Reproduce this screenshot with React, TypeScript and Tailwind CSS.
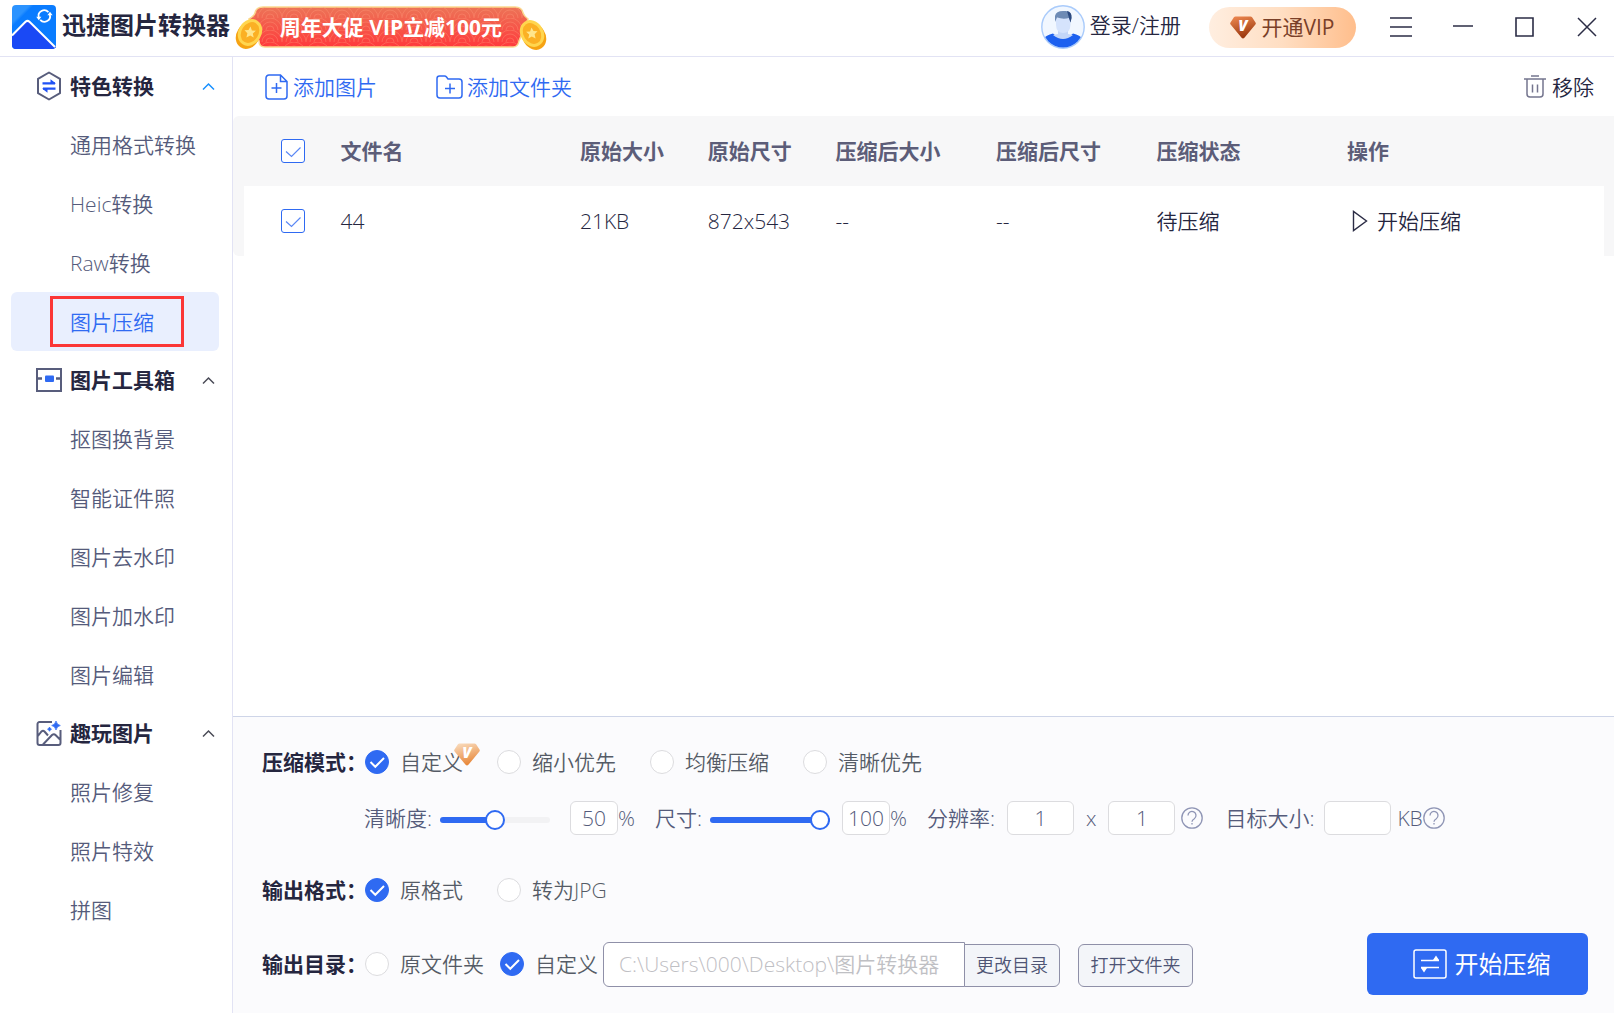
import { useState, type CSSProperties, type ReactNode } from "react";

const groups = [
  {
    title: "特色转换",
    icon: <HexIcon />,
    items: ["通用格式转换", "Heic转换", "Raw转换", "图片压缩"],
  },
  {
    title: "图片工具箱",
    icon: <ToolboxIcon />,
    items: ["抠图换背景", "智能证件照", "图片去水印", "图片加水印", "图片编辑"],
  },
  {
    title: "趣玩图片",
    icon: <PhotoIcon />,
    items: ["照片修复", "照片特效", "拼图"],
  },
];

const columns = ["原始大小", "原始尺寸", "压缩后大小", "压缩后尺寸", "压缩状态", "操作"];

function HexIcon() {
  return (
    <svg width="26" height="30" viewBox="0 0 26 30" fill="none">
      <path d="M13 1.5 24 7.8v14.4L13 28.5 2 22.2V7.8z" stroke="#585d7c" strokeWidth="2" strokeLinejoin="round" />
      <path d="M6.5 12.4h12.5M19.5 17.6H7" stroke="#2052f5" strokeWidth="2.4" />
      <path d="M14.5 8.2l5.5 4.2h-5.5zM11.5 21.8 6 17.6h5.5z" fill="#2052f5" />
    </svg>
  );
}

function ToolboxIcon() {
  return (
    <svg width="26" height="24" viewBox="0 0 26 24" fill="none">
      <rect x="1" y="1" width="24" height="22" stroke="#585d7c" strokeWidth="2" />
      <path d="M0 10.5h6M20 10.5h6" stroke="#585d7c" strokeWidth="2.4" />
      <rect x="9" y="7.5" width="9" height="6.5" rx="1" fill="#2f6af2" />
    </svg>
  );
}

function PhotoIcon() {
  return (
    <svg width="26" height="26" viewBox="0 0 26 26" fill="none">
      <path
        d="M16 2H3.5A2 2 0 0 0 1.5 4v19a2 2 0 0 0 2 2h19a2 2 0 0 0 2-2V10M1.500 16.500l4-5q1.500-1.500 3 0l3.500 4M7 24.500l9-9.500q2-1.500 3.500 0l5 5"
        stroke="#585d7c"
        strokeWidth="2"
      />
      <path
        d="M20 1q.8 3.700 4.300 4.500Q20.800 6.300 20 10q-.8-3.700-4.300-4.500Q19.200 4.700 20 1zM13.500 7q.5 1.600 2 2.200-1.500.5-2 2.100-.5-1.600-2-2.100 1.500-.6 2-2.200z"
        fill="#2f6af2"
        stroke="#2f6af2"
        strokeWidth="0.700"
      />
    </svg>
  );
}

function Logo() {
  return (
    <svg width="44" height="44" viewBox="0 0 44 44" fill="none" className="shrink-0">
      <defs>
        <linearGradient id="logo" x1="0" y1="0" x2="1" y2="1">
          <stop offset="0.2" stopColor="#2b93ff" />
          <stop offset="0.25" stopColor="#0a7cff" />
          <stop offset="1" stopColor="#0a7cff" />
        </linearGradient>
      </defs>
      <rect width="44" height="44" rx="4" fill="url(#logo)" />
      <path d="M0 30.500 13.500 16.800q2-1.800 4 0L44 43v-3a4 4 0 0 1-4 4H4a4 4 0 0 1-4-4z" fill="#1a49f5" />
      <path d="M0 30.500 13.500 16.800q2-1.800 4 0L43 42" stroke="#fff" strokeWidth="2" />
      <path d="M26.800 12.500a5.600 5.600 0 0 1 9.600-5.300M37.800 9.500a5.600 5.600 0 0 1-9.600 5.300" stroke="#fff" strokeWidth="1.800" />
      <path d="M24.200 11.800h5.200l-2.600 3.400zM35.400 10.200h5.200L38 6.800z" fill="#fff" />
    </svg>
  );
}

function Coin({ className }: { className: string }) {
  return (
    <svg width="30" height="32" viewBox="0 0 30 32" className={className}>
      <ellipse cx="14" cy="17.500" rx="11.500" ry="14" transform="rotate(32 14 17.500)" fill="#f6a313" />
      <ellipse cx="16" cy="14.500" rx="11.500" ry="14" transform="rotate(32 16 14.500)" fill="#ffd64f" />
      <ellipse cx="16" cy="14.500" rx="8.500" ry="11" transform="rotate(32 16 14.500)" fill="#fbb024" />
      <path d="M16.500 8.500l1.400 3.900 4 .3-3.100 2.700.9 4.200-3.500-2.200-3.800 2 1-4.200-2.900-2.900 4-.2z" fill="#ffe58c" />
    </svg>
  );
}

function Avatar() {
  return (
    <svg width="44" height="44" viewBox="0 0 44 44">
      <clipPath id="face">
        <circle cx="22" cy="22" r="20.500" />
      </clipPath>
      <circle cx="22" cy="22" r="21.200" fill="#f1f7ff" stroke="#a9cbfb" strokeWidth="1.400" />
      <g clipPath="url(#face)">
        <path d="M2 44V34q3-4 10-5.500 10 9 20 0 7 1.500 10 5.500v10z" fill="#1c60ef" />
        <path d="M17 22h10v7q5 1 5 1-10 8-20 0l5-1z" fill="#c3d6f8" />
        <path d="M15 13h14.500v7q-.5 8-7.300 8T15 20z" fill="#d5e3fc" />
        <path d="M14 17V11q1-5 8-5h3q6 .5 5.500 7l-1 4.500-1.500-4.500q-6 1.500-12-.5z" fill="#6e8bb5" />
        <path d="M26 6q5 1 4.500 7l-1 4.500L28 13z" fill="#2c4a80" />
      </g>
    </svg>
  );
}

function Diamond({ light = false, className = "" }: { light?: boolean; className?: string }) {
  const id = light ? "gem-light" : "gem-dark";
  return (
    <svg width="26" height="23" viewBox="0 0 26 23" className={className} aria-hidden="true">
      <linearGradient id={id} x1="0" y1="0" x2="0.3" y2="1">
        <stop offset="0" stopColor={light ? "#fadfc3" : "#f08a52"} />
        <stop offset="1" stopColor={light ? "#e8893c" : "#9c3a10"} />
      </linearGradient>
      <path d="M5.500.500h15q1 0 1.600.8l3.400 5.200q.7 1-.1 2L14.400 21.800q-1.400 1.400-2.800 0L.6 8.500q-.8-1-.1-2l3.400-5.200q.6-.8 1.600-.8z" fill={`url(#${id})`} />
      <text x="13" y="15" textAnchor="middle" fontSize="15" fontWeight="800" fontStyle="italic" fill="#fff">
        V
      </text>
    </svg>
  );
}

function Help() {
  return (
    <button type="button" aria-label="帮助" className="shrink-0">
      <svg width="22" height="22" viewBox="0 0 22 22" fill="none" stroke="#8f95b5" strokeWidth="1.300">
        <circle cx="11" cy="11" r="10.200" />
        <path d="M7 8.500a4 4 0 1 1 6.300 3.200q-2.300 1.300-2.300 3" />
        <path d="M11 16v1.600" />
      </svg>
    </button>
  );
}

function Check({ checked, onChange, label }: { checked: boolean; onChange: () => void; label: string }) {
  return (
    <label className="relative block size-6">
      <input
        type="checkbox"
        aria-label={label}
        checked={checked}
        onChange={onChange}
        className="peer block size-6 appearance-none rounded-[3px] border border-[#2f6af2] bg-white"
      />
      <svg className="absolute inset-0 hidden peer-checked:block" width="24" height="24" viewBox="0 0 24 24" fill="none">
        <path d="M5 12.500l5.500 5L19.500 8.500" stroke="#5b88f5" strokeWidth="1.200" />
      </svg>
    </label>
  );
}

interface RadioProps {
  name: string;
  label: string;
  value: string;
  onSelect: (label: string) => void;
  children?: ReactNode;
}

function Radio({ name, label, value, onSelect, children }: RadioProps) {
  return (
    <label className="relative flex items-center gap-[11px] whitespace-nowrap text-[#555b66]">
      <input
        type="radio"
        name={name}
        checked={value === label}
        onChange={() => onSelect(label)}
        className="peer size-6 shrink-0 appearance-none rounded-full border border-[#dcdcdf] bg-white checked:border-[#2f6af2] checked:bg-[#2f6af2]"
      />
      <svg className="absolute left-0 hidden peer-checked:block" width="24" height="24" viewBox="0 0 24 24" fill="none">
        <path d="M5.500 12l4.800 4.800L19 8" stroke="#fff" strokeWidth="2" />
      </svg>
      {label}
      {children}
    </label>
  );
}

function Slider({ label, value, onChange, className }: { label: string; value: number; onChange: (v: number) => void; className: string }) {
  return (
    <input
      type="range"
      aria-label={label}
      value={value}
      onChange={(e) => onChange(Number(e.target.value))}
      style={{ "--fill": `${value}%` } as CSSProperties}
      className={`mt-1 ml-2 h-5 appearance-none bg-transparent [&::-webkit-slider-runnable-track]:h-[6px] [&::-webkit-slider-runnable-track]:rounded-full [&::-webkit-slider-runnable-track]:bg-[linear-gradient(to_right,#2f6af2_var(--fill),#f2f2f4_var(--fill))] [&::-webkit-slider-thumb]:-mt-[7px] [&::-webkit-slider-thumb]:size-5 [&::-webkit-slider-thumb]:appearance-none [&::-webkit-slider-thumb]:rounded-full [&::-webkit-slider-thumb]:border-2 [&::-webkit-slider-thumb]:border-[#2f6af2] [&::-webkit-slider-thumb]:bg-white ${className}`}
    />
  );
}

function NumberBox({ label, value, className }: { label: string; value: string; className: string }) {
  return (
    <input
      type="text"
      aria-label={label}
      defaultValue={value}
      className={`h-[34px] rounded-md border border-[#dcdcdf] bg-white text-center ${className}`}
    />
  );
}

function Header() {
  return (
    <header className="flex h-[57px] shrink-0 items-center justify-between border-b border-[#e2e3f4] pr-4 pb-[2px] pl-3">
      <div className="flex items-center">
        <Logo />
        <h1 className="ml-[6px] pb-1 text-2xl font-bold whitespace-nowrap text-[#25263f]">迅捷图片转换器</h1>
        <a href="#promo" className="relative ml-1 flex h-[42px] w-[314px] items-center justify-center font-bold whitespace-nowrap text-white">
          <svg className="absolute inset-0" width="314" height="42" viewBox="0 0 314 42">
            <defs>
              <linearGradient id="promo" x1="0" y1="0" x2="0" y2="1">
                <stop offset="0" stopColor="#ec7457" />
                <stop offset="1" stopColor="#ff3a3c" />
              </linearGradient>
              <pattern id="waves" width="24" height="12" patternUnits="userSpaceOnUse">
                <path d="M0 12a12 12 0 0 1 24 0M4 12a8 8 0 0 1 16 0M8 12a4 4 0 0 1 8 0" fill="none" stroke="#ff9a7c" strokeOpacity="0.35" />
              </pattern>
            </defs>
            <path d="M29 1h252q7 0 8 6 1 3 5 6l-9 22q-1 6-6 6H31q-6 0-6-6L15 13q5-3 6-6 1-6 8-6z" fill="url(#promo)" stroke="#fbd98f" strokeWidth="1.500" />
            <path d="M29 1h252q7 0 8 6 1 3 5 6l-9 22q-1 6-6 6H31q-6 0-6-6L15 13q5-3 6-6 1-6 8-6z" fill="url(#waves)" />
          </svg>
          <Coin className="absolute top-3 left-0" />
          <Coin className="absolute top-[13px] right-0 -scale-x-100" />
          <span className="relative">周年大促 VIP立减100元</span>
        </a>
      </div>

      <div className="flex items-center">
        <button type="button" className="flex items-center gap-[5px] whitespace-nowrap text-[#25263f]">
          <Avatar />
          <span className="pb-1">登录/注册</span>
        </button>
        <button
          type="button"
          className="ml-7 flex h-[41px] w-[147px] items-center justify-center gap-[5px] rounded-full bg-linear-to-r from-[#ffeee0] via-[#ffdec2] to-[#ffbe8c] font-normal whitespace-nowrap text-[#7a4028]"
        >
          <Diamond />
          开通VIP
        </button>
        <div className="ml-[34px] flex items-center gap-10 text-[#2b2c45]">
          <button type="button" aria-label="菜单">
            <svg width="22" height="20" viewBox="0 0 22 20" stroke="currentColor" strokeWidth="1.500">
              <path d="M0 1h22M0 10h22M0 19h22" />
            </svg>
          </button>
          <button type="button" aria-label="最小化">
            <svg width="22" height="20" viewBox="0 0 22 20" stroke="currentColor" strokeWidth="1.500">
              <path d="M1 9h20" />
            </svg>
          </button>
          <button type="button" aria-label="最大化">
            <svg width="22" height="20" viewBox="0 0 22 20" fill="none" stroke="currentColor" strokeWidth="1.600">
              <path d="M2 1h17v18H2z" />
            </svg>
          </button>
          <button type="button" aria-label="关闭">
            <svg width="22" height="20" viewBox="0 0 22 20" stroke="currentColor" strokeWidth="1.500">
              <path d="M2 1l18 18M20 1 2 19" />
            </svg>
          </button>
        </div>
      </div>
    </header>
  );
}

function Sidebar() {
  const [active, setActive] = useState("图片压缩");
  return (
    <nav className="w-[233px] shrink-0 border-r border-[#e2e3f4]">
      {groups.map((group, index) => (
        <section key={group.title}>
          <button type="button" className="flex h-[58px] w-full items-center pr-[17px] pl-9 font-bold text-[#25263f]">
            <span className="mr-2 flex w-[26px] justify-center">{group.icon}</span>
            {group.title}
            <svg className="ml-auto" width="13" height="9" viewBox="0 0 13 9" fill="none">
              <path d="M1 7.500l5.500-5.500L12 7.500" stroke={index === 0 ? "#1890ff" : "#4a4b57"} strokeWidth="1.500" />
            </svg>
          </button>
          <ul>
            {group.items.map((item) => (
              <li key={item} className="pr-[13px] pl-[11px]">
                <button
                  type="button"
                  onClick={() => setActive(item)}
                  className={`flex h-[59px] w-full items-center rounded-md ${item === active ? "bg-[#e9effe] pl-[39px] text-[#2f6af2]" : "pl-[59px] text-[#555b7b]"}`}
                >
                  {item === active ? (
                    <span className="flex h-[51px] w-[134px] items-center border-3 border-[#fb3636] pl-[17px]">{item}</span>
                  ) : (
                    item
                  )}
                </button>
              </li>
            ))}
          </ul>
        </section>
      ))}
    </nav>
  );
}

function FileTable() {
  const [checked, setChecked] = useState(true);
  const toggle = () => setChecked(!checked);
  return (
    <div className="rounded-l-md bg-[#f7f7f8] pr-[10px] pl-[11px]">
      <table className="w-full table-fixed text-left whitespace-nowrap">
        <colgroup>
          <col className="w-[7.1%]" />
          <col className="w-[17.6%]" />
          <col className="w-[9.4%]" />
          <col className="w-[9.4%]" />
          <col className="w-[11.8%]" />
          <col className="w-[11.8%]" />
          <col className="w-[14%]" />
          <col />
        </colgroup>
        <thead>
          <tr className="h-[70px] text-[#5c5d78]">
            <th className="pl-[37px]">
              <Check checked={checked} onChange={toggle} label="全选" />
            </th>
            <th>文件名</th>
            {columns.map((c) => (
              <th key={c}>{c}</th>
            ))}
          </tr>
        </thead>
        <tbody>
          <tr className="h-[70px] bg-white text-[#25263f]">
            <td className="pl-[37px]">
              <Check checked={checked} onChange={toggle} label="选择 44" />
            </td>
            <td>44</td>
            <td>21KB</td>
            <td>872x543</td>
            <td>--</td>
            <td>--</td>
            <td>待压缩</td>
            <td>
              <button type="button" className="flex items-center gap-[9px] pl-[5px]">
                <svg width="16" height="22" viewBox="0 0 16 22" fill="none">
                  <path d="M1.500 1.500v19L14.500 11z" stroke="#2b2c45" strokeWidth="1.400" />
                </svg>
                开始压缩
              </button>
            </td>
          </tr>
        </tbody>
      </table>
    </div>
  );
}

function RowTitle({ children }: { children: string }) {
  return <legend className="float-left w-[103px] shrink-0 font-bold whitespace-nowrap text-[#25263f]">{children}</legend>;
}

function Settings() {
  const [mode, setMode] = useState("自定义");
  const [format, setFormat] = useState("原格式");
  const [target, setTarget] = useState("自定义");
  const [clarity, setClarity] = useState(50);
  const [size, setSize] = useState(100);

  return (
    <form className="shrink-0 border-t border-[#ced5e8] bg-[#fbfbfd] pt-7 pr-[26px] pb-[18px] pl-[29px] whitespace-nowrap">
      <fieldset className="flex h-[34px] items-center">
        <RowTitle>压缩模式：</RowTitle>
        <div className="flex gap-[34px]">
          <Radio name="mode" label="自定义" value={mode} onSelect={setMode}>
            <Diamond light className="absolute -top-[5px] left-[89px]" />
          </Radio>
          <Radio name="mode" label="缩小优先" value={mode} onSelect={setMode} />
          <Radio name="mode" label="均衡压缩" value={mode} onSelect={setMode} />
          <Radio name="mode" label="清晰优先" value={mode} onSelect={setMode} />
        </div>
      </fieldset>

      <div className="mt-[22px] flex h-[34px] items-center pl-[102px] text-[#555b7b]">
        清晰度:
        <Slider label="清晰度" value={clarity} onChange={setClarity} className="w-[110px]" />
        <NumberBox key={`clarity-${clarity}`} label="清晰度百分比" value={String(clarity)} className="ml-5 w-12" />%
        <span className="ml-5">尺寸:</span>
        <Slider label="尺寸" value={size} onChange={setSize} className="w-[120px]" />
        <NumberBox key={`size-${size}`} label="尺寸百分比" value={String(size)} className="ml-3 w-12" />%
        <span className="ml-5">分辨率:</span>
        <NumberBox label="分辨率宽" value="1" className="mx-3 w-[67px]" />x
        <NumberBox label="分辨率高" value="1" className="mr-[6px] ml-3 w-[67px]" />
        <Help />
        <span className="ml-[22px]">目标大小:</span>
        <NumberBox label="目标大小" value="" className="mr-[6px] ml-[10px] w-[67px]" />
        KB
        <Help />
      </div>

      <fieldset className="mt-[38px] flex h-[34px] items-center">
        <RowTitle>输出格式：</RowTitle>
        <div className="flex gap-[34px]">
          <Radio name="format" label="原格式" value={format} onSelect={setFormat} />
          <Radio name="format" label="转为JPG" value={format} onSelect={setFormat} />
        </div>
      </fieldset>

      <div className="mt-[26px] flex h-[62px] items-center justify-between">
        <fieldset className="flex items-center">
          <RowTitle>输出目录：</RowTitle>
          <div className="flex gap-4">
            <Radio name="target" label="原文件夹" value={target} onSelect={setTarget} />
            <Radio name="target" label="自定义" value={target} onSelect={setTarget} />
          </div>
          <div className="ml-[5px] flex items-end text-lg text-[#4f5575]">
            <input
              type="text"
              aria-label="输出目录"
              placeholder="C:\Users\000\Desktop\图片转换器"
              className="h-[45px] w-[362px] rounded-l-md border border-[#8f90a8] bg-white px-[15px] text-[21px] placeholder:text-[#bfc0c4]"
            />
            <button type="button" className="-ml-px h-[43px] w-24 rounded-r-md border border-[#8f90a8] bg-[#f3f5f9]">
              更改目录
            </button>
            <button type="button" className="ml-[18px] h-[43px] w-[115px] rounded-md border border-[#8f90a8] bg-[#f3f5f9]">
              打开文件夹
            </button>
          </div>
        </fieldset>
        <button type="button" className="flex h-[62px] w-[221px] items-center justify-center gap-2 rounded-md bg-[#2f6af2] pl-2 text-2xl font-normal text-white">
          <svg width="34" height="30" viewBox="0 0 34 30" fill="none">
            <rect x="1" y="1" width="32" height="28" rx="2" stroke="#fff" strokeWidth="1.500" />
            <path d="M8 11.500h18M8 18.500h18" stroke="#fff" strokeWidth="1.700" />
            <path d="M20 11l3-4.500 3 4.500zM8 19l3 4.500 3-4.500z" fill="#fff" />
          </svg>
          开始压缩
        </button>
      </div>
    </form>
  );
}

export default function App() {
  return (
    <div className="flex min-h-screen flex-col bg-white font-['Open_Sans','Noto_Sans_CJK_SC',sans-serif] text-[21px] leading-7 font-[350]">
      <Header />
      <div className="flex flex-1">
        <Sidebar />
        <main className="flex min-w-0 flex-1 flex-col">
          <div className="flex h-[59px] shrink-0 items-center justify-between pr-5 pl-8 text-[#2f6af2]">
            <div className="flex items-center gap-[59px]">
              <button type="button" className="flex items-center gap-1">
                <svg width="24" height="26" viewBox="0 0 24 26" fill="none" stroke="currentColor" strokeWidth="1.500">
                  <path d="M15.500 1H4a3 3 0 0 0-3 3v18a3 3 0 0 0 3 3h15a3 3 0 0 0 3-3V7.500zV7.500H22M11.500 9v10M6.500 14h10" />
                </svg>
                添加图片
              </button>
              <button type="button" className="flex items-center gap-1">
                <svg width="27" height="24" viewBox="0 0 27 24" fill="none" stroke="currentColor" strokeWidth="1.500">
                  <path d="M1 20V3.500Q1 1 3.500 1h5q1.200 0 2 1l1.500 2H23q3 0 3 3v13q0 3-3 3H4q-3 0-3-3zM14 8.500v10M9 13.500h10" />
                </svg>
                添加文件夹
              </button>
            </div>
            <button type="button" className="flex items-center gap-[6px] text-[#25263f]">
              <svg width="22" height="23" viewBox="0 0 22 23" fill="none" stroke="#74758e" strokeWidth="1.500">
                <path d="M0 4h22M7 1h8M3 4v15q0 3 3 3h10q3 0 3-3V4M8.500 9.500v8M13.500 9.500v8" />
              </svg>
              移除
            </button>
          </div>
          <FileTable />
          <div className="flex-1" />
          <Settings />
        </main>
      </div>
    </div>
  );
}
